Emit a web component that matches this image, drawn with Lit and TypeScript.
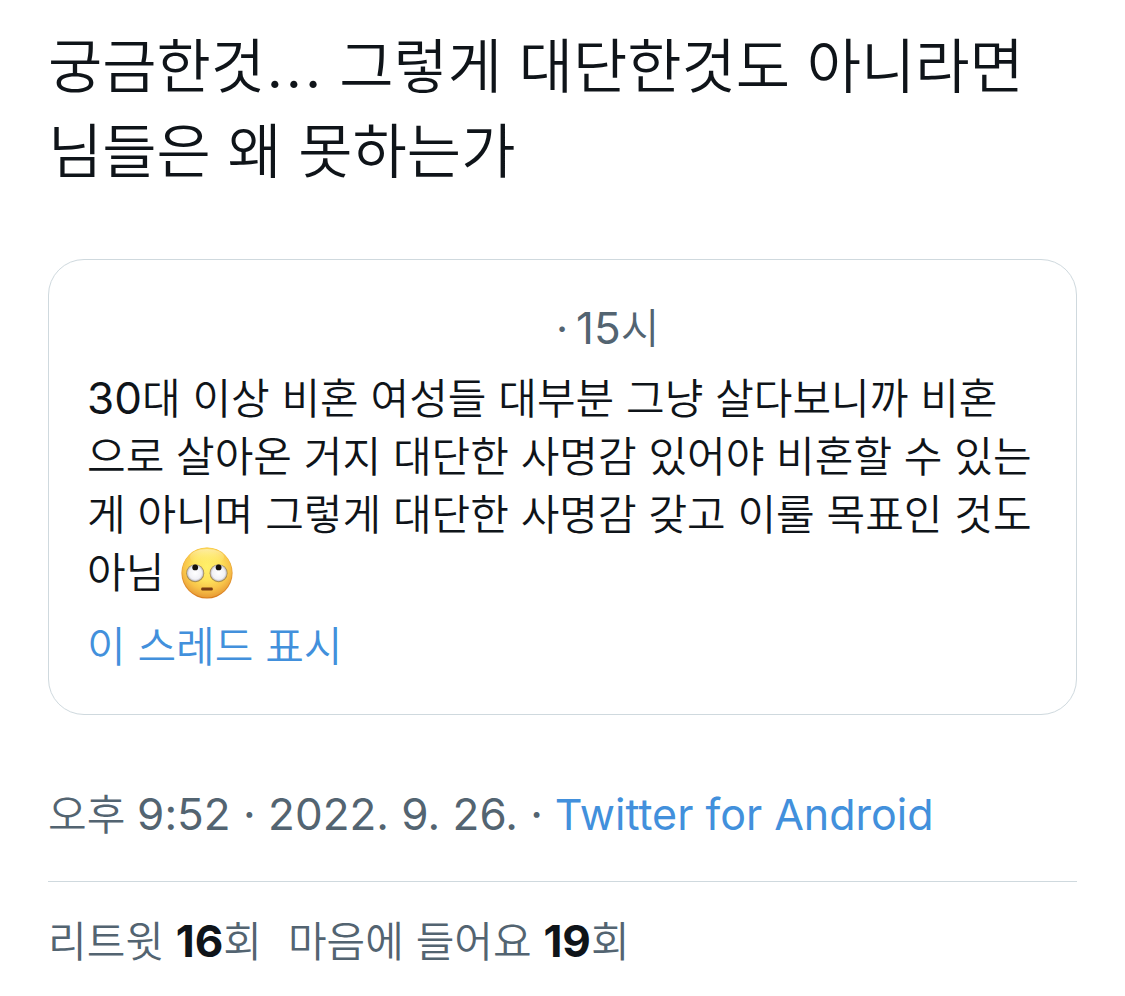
import { LitElement, html, css } from "lit";
import { customElement } from "lit/decorators.js";

@customElement("rolling-eyes")
class RollingEyes extends LitElement {
  static styles = css`
    :host { display: inline-block; width: 52px; height: 52px; line-height: 0; }
    svg { display: block; width: 100%; height: 100%; }
  `;
  render() {
    return html`<svg viewBox="0 0 52 52" role="img" aria-label="🙄">
      <defs>
        <linearGradient id="rim" x1="0" y1="0" x2="0" y2="1">
          <stop offset="0" stop-color="#f5c53c" /><stop offset=".5" stop-color="#e49b34" /><stop offset="1" stop-color="#d87c1e" />
        </linearGradient>
        <radialGradient id="face" cx=".5" cy=".38" r=".62">
          <stop offset="0" stop-color="#fff06a" /><stop offset=".45" stop-color="#fee25c" /><stop offset=".75" stop-color="#f8c349" /><stop offset="1" stop-color="#e89c36" />
        </radialGradient>
        <linearGradient id="shine" x1="0" y1="0" x2="0" y2="1">
          <stop offset="0" stop-color="#fffbd8" stop-opacity=".6" /><stop offset="1" stop-color="#fff06a" stop-opacity="0" />
        </linearGradient>
        <radialGradient id="eye" cx=".5" cy=".5" r=".5">
          <stop offset="0" stop-color="#fff" /><stop offset=".75" stop-color="#f1f1f6" /><stop offset="1" stop-color="#b9b7c0" />
        </radialGradient>
      </defs>
      <circle cx="26" cy="26" r="25.6" fill="url(#rim)" />
      <circle cx="26" cy="25.6" r="24.8" fill="url(#face)" />
      <ellipse cx="26" cy="10" rx="17" ry="8" fill="url(#shine)" />
      <circle cx="14.2" cy="26.2" r="9" fill="#a78b4b" />
      <circle cx="37.6" cy="26.2" r="9" fill="#a78b4b" />
      <circle cx="14.2" cy="26" r="8.3" fill="url(#eye)" />
      <circle cx="37.6" cy="26" r="8.3" fill="url(#eye)" />
      <circle cx="14.2" cy="20.4" r="2.9" fill="#15100b" />
      <circle cx="37.6" cy="20.4" r="2.9" fill="#15100b" />
      <rect x="20.2" y="40.6" width="11.6" height="2.8" rx="1.2" fill="#793b12" />
    </svg>`;
  }
}

@customElement("app-root")
class AppRoot extends LitElement {
  static styles = css`
    :host { display: block; background: #fff; color: #0f1419; font-family: Inter, "Noto Sans CJK KR", sans-serif; font-size: 42px; line-height: 58px; font-weight: 350; }
    .tweet { padding: 24px 48px; }
    p { margin: 0; }
    .text { font-size: 59px; line-height: 85px; }
    .dots { font-size: 68px; line-height: 1; }
    .quote { margin-top: 65px; border: 1px solid #cfd9de; border-radius: 36px; padding: 40px 38px 38px; }
    .time, .meta, .stats { color: #536471; }
    .time { display: flex; gap: 8px; padding-left: 469px; }
    .sep { font-weight: 400; }
    .body { margin-top: 12px; }
    .emoji { display: inline-flex; align-items: center; height: 58px; margin-left: 5px; vertical-align: bottom; }
    .latin, b { font-size: 44px; line-height: 1; }
    .latin { font-weight: 380; }
    a { color: #4290dc; text-decoration: none; }
    .thread { display: block; margin-top: 16px; }
    .meta { margin-top: 71px; padding-bottom: 37px; border-bottom: 1px solid #cfd9de; }
    .source { font-size: 43px; line-height: 1; font-weight: 380; }
    .stats { display: flex; gap: 26px; margin-top: 31px; }
    b { color: #0f1419; font-weight: 700; }
  `;
  render() {
    return html`<article class="tweet">
      <p class="text">궁금한것<span class="dots">...</span> 그렇게 대단한것도 아니라면<br />님들은 왜 못하는가</p>
      <section class="quote">
        <div class="time"><span class="sep">·</span><span><span class="latin">15</span>시</span></div>
        <p class="body"><span class="latin">30</span>대 이상 비혼 여성들 대부분 그냥 살다보니까 비혼<br />으로 살아온 거지 대단한 사명감 있어야 비혼할 수 있는<br />게 아니며 그렇게 대단한 사명감 갖고 이룰 목표인 것도<br />아님 <span class="emoji"><rolling-eyes></rolling-eyes></span></p>
        <a class="thread" href="#">이 스레드 표시</a>
      </section>
      <div class="meta">오후 <span class="latin">9:52 · 2022. 9. 26. ·</span> <a class="source" href="#">Twitter for Android</a></div>
      <div class="stats"><span>리트윗 <b>16</b>회</span><span>마음에 들어요 <b>19</b>회</span></div>
    </article>`;
  }
}
